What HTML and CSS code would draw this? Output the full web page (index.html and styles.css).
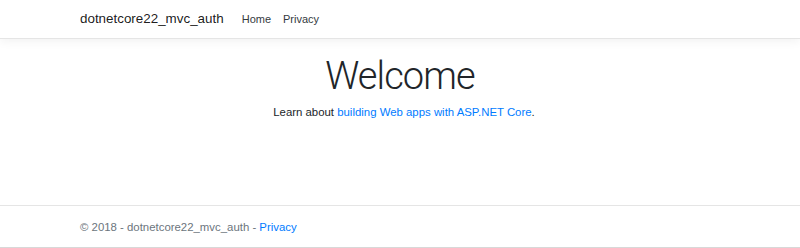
FILE: index.html
```html
<!DOCTYPE html>
<html lang="en">
<head>
<meta charset="utf-8">
<title>Home Page - dotnetcore22_mvc_auth</title>
<link rel="stylesheet" href="styles.css">
</head>
<body>
<header class="site-header">
  <nav class="navbar">
    <a class="brand" href="#">dotnetcore22_mvc_auth</a>
    <ul class="nav-links">
      <li><a class="nav-link" href="#">Home</a></li>
      <li><a class="nav-link" href="#">Privacy</a></li>
    </ul>
  </nav>
</header>
<main class="main">
  <h1 class="display">Welcome</h1>
  <p class="lead-text">Learn about <a class="link" href="#">building Web apps with ASP.NET Core</a>.</p>
</main>
<footer class="footer">
  <div class="footer-inner">© 2018 - dotnetcore22_mvc_auth - <a class="link" href="#">Privacy</a></div>
</footer>
</body>
</html>
```
FILE: styles.css
```css
* { box-sizing: border-box; }
html, body { margin: 0; padding: 0; }
body {
  width: 800px;
  height: 248px;
  font-family: "Liberation Sans", Arial, sans-serif;
  font-size: 11.4px;
  color: #212529;
  background: #fff;
  display: flex;
  flex-direction: column;
  overflow: hidden;
}
a { text-decoration: none; }
.site-header {
  height: 39px;
  border-bottom: 1px solid #e5e5e5;
  box-shadow: 0 3px 9px rgba(0,0,0,0.05);
  background: #fff;
  position: relative;
  z-index: 1;
}
.navbar {
  height: 38px;
  display: flex;
  align-items: center;
  padding-left: 80px;
}
.brand {
  font-size: 13.4px;
  color: rgba(0,0,0,0.9);
  margin-right: 18px;
  line-height: 1;
  padding-bottom: 1px;
}
.nav-links {
  list-style: none;
  margin: 0;
  padding: 0;
  display: flex;
  gap: 12px;
}
.nav-link {
  color: #343a40;
  font-size: 11px;
}
.main {
  flex: 1;
  text-align: center;
}
.display {
  margin: 15px 0 0;
  font-family: Roboto, "Liberation Sans", sans-serif;
  font-weight: 300;
  font-size: 38px;
  letter-spacing: -0.9px;
  line-height: 1.2;
}
.lead-text {
  margin: 4px 0 0;
  line-height: 1.5;
  padding-left: 8px;
}
.link { color: #007bff; }
.footer {
  height: 43px;
  border-top: 1px solid #e5e5e5;
  border-bottom: 1px solid #d8d8d8;
  display: flex;
  align-items: center;
  padding-left: 80px;
  color: #6c757d;
}
.footer-inner { padding-top: 1px; }
```
